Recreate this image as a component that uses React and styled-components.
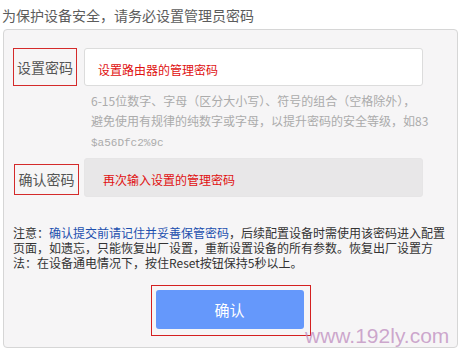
import React from 'react';
import styled, { createGlobalStyle } from 'styled-components';

const Global = createGlobalStyle`
  body {
    margin: 0;
    background: #fff;
    font-family: 'Noto Sans CJK SC', 'Liberation Sans', sans-serif;
  }
`;

const Page = styled.div`
  position: relative;
  width: 460px;
  height: 356px;
  overflow: hidden;
`;

const Title = styled.h1`
  margin: 0;
  padding: 5px 0 0 2px;
  height: 29px;
  box-sizing: border-box;
  font-size: 14px;
  font-weight: normal;
  line-height: 20px;
  color: #5c5c5c;
`;

const Card = styled.div`
  margin: 0 2px 0 3px;
  height: 319px;
  box-sizing: border-box;
  border: 1px solid #d6d6d6;
  border-radius: 4px;
  background: #f6f5f6;
  padding: 18px 0 0 9px;
`;

const Row = styled.div`
  display: flex;
  align-items: center;
  gap: ${p => p.$gap}px;
  margin-left: ${p => p.$shift}px;
`;

const Label = styled.div`
  width: ${p => p.$w}px;
  height: ${p => p.$h}px;
  box-sizing: border-box;
  border: 1px solid #d42a2a;
  display: flex;
  align-items: center;
  justify-content: center;
  font-size: 14px;
  color: #555;
  margin-top: ${p => p.$dy}px;
`;

const Input = styled.div`
  width: 339px;
  height: ${p => p.$h}px;
  box-sizing: border-box;
  border: 1px solid ${p => (p.$filled ? '#e6e5e6' : '#dcdcdc')};
  border-radius: 3px;
  background: ${p => (p.$filled ? '#e8e7e8' : '#fff')};
  display: flex;
  align-items: center;
  padding-left: ${p => p.$pad}px;
  padding-top: 4px;
  font-size: 12px;
  color: #e01010;
`;

const Hint = styled.div`
  margin: 5px 0 5px 78px;
  font-size: 12px;
  line-height: 20px;
  color: #ababab;
  white-space: nowrap;
`;

const Mono = styled.span`
  font-family: 'Liberation Mono', 'DejaVu Sans Mono', monospace;
  font-size: 11px;
`;

const Note = styled.p`
  margin: 28px 0 0 0;
  font-size: 12px;
  line-height: 15px;
  color: #333;
  white-space: nowrap;
`;

const Blue = styled.span`
  color: #1c4fae;
`;

const ButtonWrap = styled.div`
  display: flex;
  justify-content: center;
  margin: 15px 0 0 -9px;
`;

const Frame = styled.div`
  border: 1px solid #d42020;
  padding: 4px 6px 6px 4px;
`;

const Button = styled.button`
  width: 148px;
  height: 39px;
  border: none;
  border-radius: 3px;
  background: #6598fb;
  color: #fff;
  font-family: inherit;
  font-size: 15px;
  cursor: pointer;
`;

const Watermark = styled.div`
  position: absolute;
  left: 305px;
  top: 322px;
  font-family: 'Liberation Sans', Arial, sans-serif;
  font-size: 21px;
  line-height: 28px;
  color: rgba(190, 140, 190, 0.75);
  pointer-events: none;
`;

export default function App() {
  return (
    <Page>
      <Global />
      <Title>为保护设备安全，请务必设置管理员密码</Title>
      <Card>
        <Row $gap={7} $shift={0}>
          <Label $w={64} $h={38} $dy={-1}>设置密码</Label>
          <Input $h={38} $pad={13}>设置路由器的管理密码</Input>
        </Row>
        <Hint>
          6-15位数字、字母（区分大小写）、符号的组合（空格除外），
          <br />
          避免使用有规律的纯数字或字母，以提升密码的安全等级，如83
          <br />
          <Mono>$a56Dfc2%9c</Mono>
        </Hint>
        <Row $gap={5} $shift={1}>
          <Label $w={65} $h={31} $dy={3}>确认密码</Label>
          <Input $h={39} $filled $pad={18}>再次输入设置的管理密码</Input>
        </Row>
        <Note>
          注意：<Blue>确认提交前请记住并妥善保管密码</Blue>，后续配置设备时需使用该密码进入配置
          <br />
          页面，如遗忘，只能恢复出厂设置，重新设置设备的所有参数。恢复出厂设置方
          <br />
          法：在设备通电情况下，按住Reset按钮保持5秒以上。
        </Note>
        <ButtonWrap>
          <Frame>
            <Button>确认</Button>
          </Frame>
        </ButtonWrap>
      </Card>
      <Watermark>www.192ly.com</Watermark>
    </Page>
  );
}
